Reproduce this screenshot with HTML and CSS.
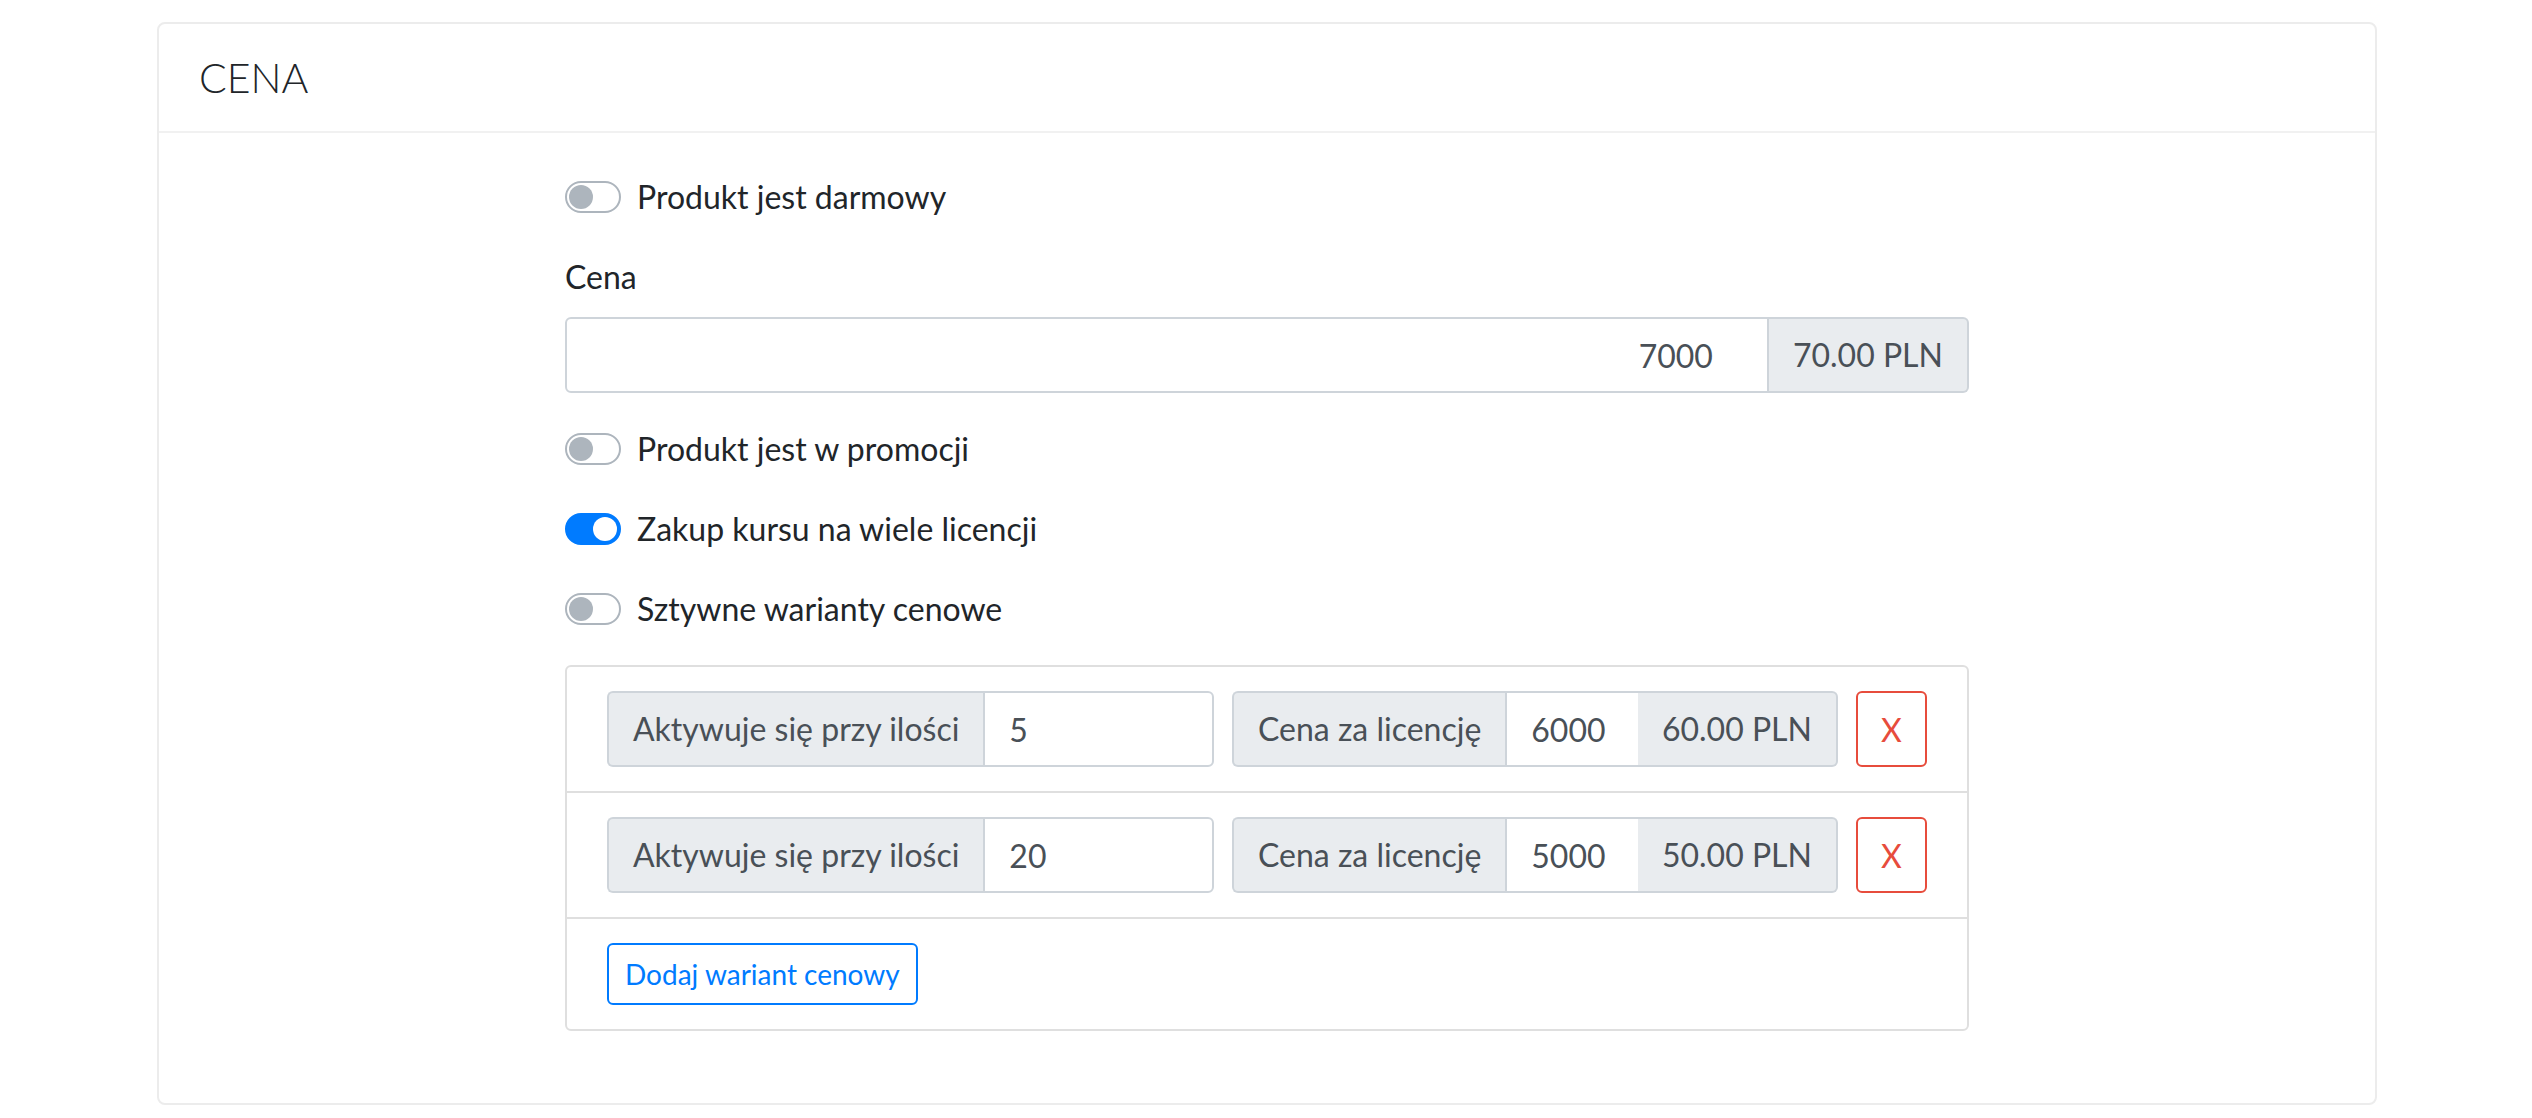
FILE: index.html
```html
<!DOCTYPE html>
<html lang="pl">
<head>
<meta charset="utf-8">
<title>Cena</title>
<link rel="stylesheet" href="styles.css">
</head>
<body>
<div class="card">
  <div class="card-header">CENA</div>
  <div class="card-body">
    <div class="form-col">
      <div class="form-group">
        <label class="switch"><span class="track"><span class="thumb"></span></span>Produkt jest darmowy</label>
      </div>
      <div class="form-group">
        <label class="field-label">Cena</label>
        <div class="input-group">
          <input class="form-control price" type="text" value="7000">
          <span class="addon addon-append">70.00 PLN</span>
        </div>
      </div>
      <div class="form-group">
        <label class="switch"><span class="track"><span class="thumb"></span></span>Produkt jest w promocji</label>
      </div>
      <div class="form-group">
        <label class="switch on"><span class="track"><span class="thumb"></span></span>Zakup kursu na wiele licencji</label>
      </div>
      <div class="form-group">
        <label class="switch"><span class="track"><span class="thumb"></span></span>Sztywne warianty cenowe</label>
      </div>
      <div class="form-group">
        <div class="list">
          <div class="list-item variant">
            <div class="input-group group-qty">
              <span class="addon addon-prepend">Aktywuje się przy ilości</span>
              <input class="form-control qty" type="text" value="5">
            </div>
            <div class="input-group group-price">
              <span class="addon addon-prepend">Cena za licencję</span>
              <input class="form-control lic" type="text" value="6000">
              <span class="addon addon-append">60.00 PLN</span>
            </div>
            <button class="btn-remove" type="button">X</button>
          </div>
          <div class="list-item variant">
            <div class="input-group group-qty">
              <span class="addon addon-prepend">Aktywuje się przy ilości</span>
              <input class="form-control qty" type="text" value="20">
            </div>
            <div class="input-group group-price">
              <span class="addon addon-prepend">Cena za licencję</span>
              <input class="form-control lic" type="text" value="5000">
              <span class="addon addon-append">50.00 PLN</span>
            </div>
            <button class="btn-remove" type="button">X</button>
          </div>
          <div class="list-item">
            <button class="btn-add" type="button">Dodaj wariant cenowy</button>
          </div>
        </div>
      </div>
    </div>
  </div>
</div>
</body>
</html>
```

FILE: styles.css
```css
* { box-sizing: border-box; }

html, body {
  margin: 0;
  background: #ffffff;
}

body {
  font-family: Lato, "Liberation Sans", sans-serif;
  font-size: 32px;
  line-height: 48px;
  color: #212529;
}

.card {
  width: 2220px;
  margin: 22px 0 0 157px;
  border: 2px solid #ececec;
  border-radius: 8px;
  background: #fff;
}

.card-header {
  padding: 24px 40px;
  border-bottom: 2px solid #f1f1f1;
  font-family: Lato, sans-serif;
  font-weight: 300;
  font-size: 41px;
  line-height: 59px;
  color: #212529;
}

.card-body {
  padding: 40px 40px 40px 40px;
}

.form-col {
  margin-left: 366px;
  width: 1404px;
}

.form-group {
  margin-bottom: 32px;
}

.switch {
  display: flex;
  align-items: flex-start;
  height: 48px;
  line-height: 48px;
  cursor: pointer;
}

.track {
  display: flex;
  justify-content: flex-start;
  width: 56px;
  height: 32px;
  margin-top: 8px;
  margin-right: 16px;
  padding: 2px;
  border: 2px solid #adb5bd;
  border-radius: 16px;
  background: #fff;
}

.thumb {
  width: 24px;
  height: 24px;
  border-radius: 50%;
  background: #adb5bd;
}

.switch.on .track {
  justify-content: flex-end;
  background: #007bff;
  border-color: #007bff;
}

.switch.on .thumb {
  background: #fff;
}

.field-label {
  display: block;
  margin-bottom: 16px;
  line-height: 48px;
}

.input-group {
  display: flex;
  height: 76px;
}

.form-control {
  min-width: 0;
  height: 76px;
  margin: 0;
  padding: 0 24px;
  border: 2px solid #ced4da;
  border-radius: 0;
  font-family: Lato, sans-serif;
  font-size: 32px;
  color: #495057;
  background: #fff;
  outline: none;
}

.form-control:first-child {
  border-radius: 6px 0 0 6px;
}

.form-control:last-child {
  border-radius: 0 6px 6px 0;
}

.price {
  flex: 1;
  text-align: right;
  padding-right: 54px;
}

.addon {
  display: flex;
  align-items: center;
  height: 76px;
  padding: 0 24px;
  border: 2px solid #ced4da;
  background: #e9ecef;
  color: #495057;
  white-space: nowrap;
}

.addon-append {
  border-left: none;
  border-radius: 0 6px 6px 0;
}

.addon-prepend {
  border-right: none;
  border-radius: 6px 0 0 6px;
}

.list {
  border: 2px solid #dfdfdf;
  border-radius: 6px;
}

.list-item {
  padding: 24px 40px;
  border-bottom: 2px solid #dfdfdf;
}

.list-item:last-child {
  border-bottom: none;
}

.variant {
  display: flex;
  gap: 18px;
}

.group-qty {
  width: 607px;
}

.group-qty .qty {
  flex: 1;
}

.group-price {
  width: 606px;
}

.group-price .lic {
  flex: 1;
  border-right: none;
}

.btn-remove {
  width: 71px;
  height: 76px;
  padding: 0;
  border: 2px solid #e74c3c;
  border-radius: 6px;
  background: #fff;
  color: #e74c3c;
  font-family: Lato, sans-serif;
  font-size: 32px;
  cursor: pointer;
}

.btn-add {
  height: 62px;
  padding: 0 16px;
  border: 2px solid #007bff;
  border-radius: 6px;
  background: #fff;
  color: #007bff;
  font-family: Lato, sans-serif;
  font-size: 28px;
  cursor: pointer;
}
```
